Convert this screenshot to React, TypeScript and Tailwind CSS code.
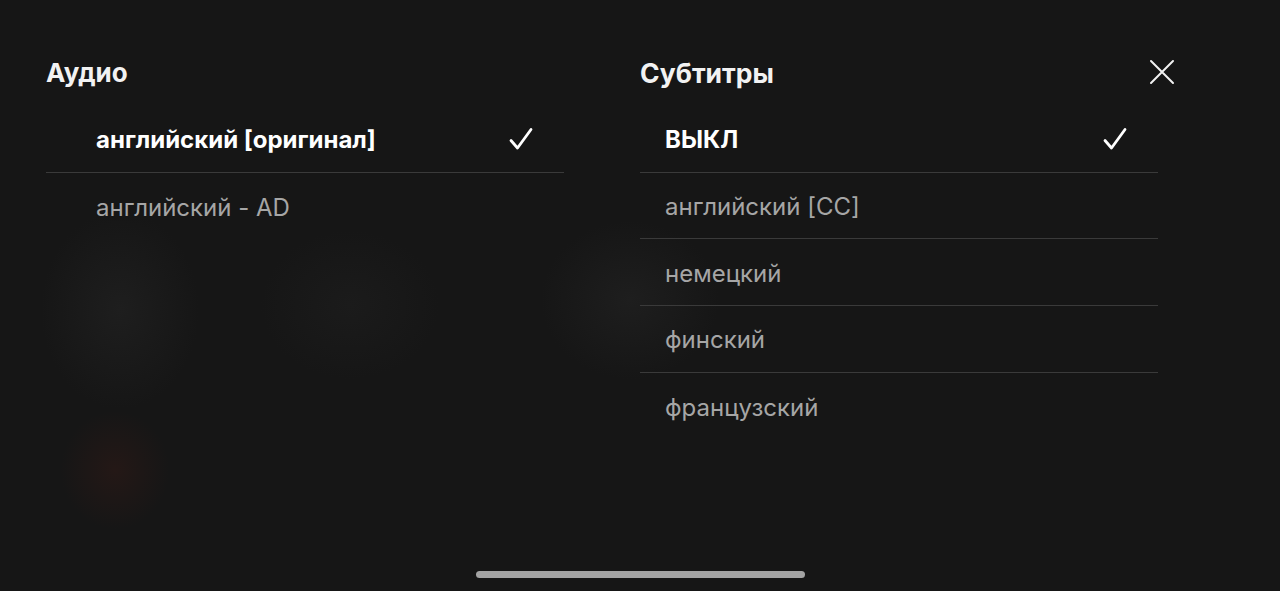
import React from "react";

const Check = () => (
  <svg width="26" height="26" viewBox="0 0 26 26" fill="none">
    <path d="M3 14.5 L9.5 22 L23 3.5" stroke="#ffffff" strokeWidth="2.8" strokeLinecap="round" strokeLinejoin="round" />
  </svg>
);

type Item = { label: string; selected?: boolean };

function Column({ title, items, indent, titleSize }: { title: string; items: Item[]; indent: string; titleSize: string }) {
  return (
    <div className="w-[518px] flex flex-col">
      <h2 className={`h-[32px] leading-[32px] ${titleSize} font-bold text-[#f2f2f2] mb-[17px]`}>{title}</h2>
      <div className="flex flex-col">
        {items.map((it, i) => (
          <div
            key={it.label}
            className={`h-[66.7px] flex items-center justify-between ${indent} pr-[30px] ${i < items.length - 1 ? "border-b border-[#3a3a3a]" : ""}`}
          >
            <span className={it.selected ? "text-[24px] leading-[30px] font-bold text-white pt-[3px]" : "text-[24px] leading-[30px] font-normal text-[#a6a6a6] pt-[3px]"}>
              {it.label}
            </span>
            {it.selected && <Check />}
          </div>
        ))}
      </div>
    </div>
  );
}

export default function App() {
  return (
    <div
      className="relative w-[1280px] h-[591px] overflow-hidden bg-[#161616]"
      style={{ fontFamily: "Inter, 'Noto Sans', sans-serif" }}
    >
      <div className="absolute left-[40px] top-[210px] w-[160px] h-[200px] rounded-full bg-radial from-[#1e1e1e] to-transparent to-70%" />
      <div className="absolute left-[60px] top-[410px] w-[110px] h-[120px] rounded-full bg-radial from-[#241816] to-transparent to-70%" />
      <div className="absolute left-[540px] top-[220px] w-[180px] h-[160px] rounded-full bg-radial from-[#1e1e1e] to-transparent to-70%" />
      <div className="absolute left-[260px] top-[230px] w-[180px] h-[150px] rounded-full bg-radial from-[#1b1b1b] to-transparent to-70%" />

      <div className="relative flex gap-[76px] pl-[46px] pt-[57px]">
        <Column
          title="Аудио"
          titleSize="text-[26px]"
          indent="pl-[50px]"
          items={[{ label: "английский [оригинал]", selected: true }, { label: "английский - AD" }]}
        />
        <Column
          title="Субтитры"
          titleSize="text-[26.5px]"
          indent="pl-[25px]"
          items={[
            { label: "ВЫКЛ", selected: true },
            { label: "английский [CC]" },
            { label: "немецкий" },
            { label: "финский" },
            { label: "французский" },
          ]}
        />
      </div>

      <button className="absolute left-[1148px] top-[58px] w-[28px] h-[28px] flex items-center justify-center">
        <svg width="26" height="26" viewBox="0 0 26 26" fill="none">
          <path d="M2 2 L24 24 M24 2 L2 24" stroke="#f2f2f2" strokeWidth="2" strokeLinecap="round" />
        </svg>
      </button>

      <div className="absolute left-[476px] top-[571px] w-[329px] h-[7px] rounded-full bg-[#a3a3a3]" />
    </div>
  );
}
